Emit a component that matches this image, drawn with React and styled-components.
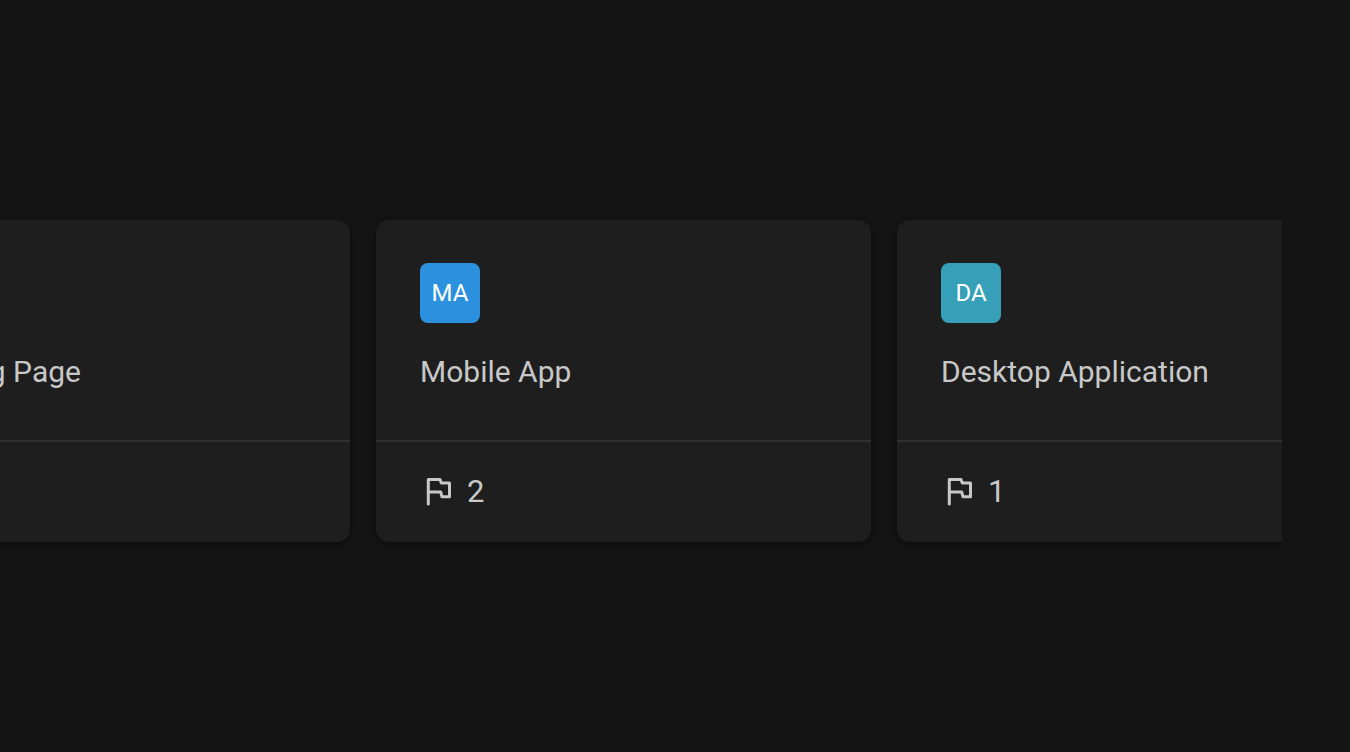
import React from "react";
import styled, { createGlobalStyle } from "styled-components";

const GlobalStyle = createGlobalStyle`
  * { box-sizing: border-box; }
  body {
    margin: 0;
    background: #141414;
    color: #c8c8c8;
    font-family: Roboto, "Liberation Sans", sans-serif;
  }
`;

const Page = styled.main`
  min-height: 100vh;
  padding: 204px 68px 194px 0;
`;

const Carousel = styled.section`
  overflow: hidden;
  padding: 16px 0;
`;

const Track = styled.ul`
  display: flex;
  gap: 26px;
  margin: 0 0 0 -145px;
  padding: 0;
  list-style: none;
`;

const Card = styled.li`
  flex: 0 0 495px;
  border-radius: 13px;
  background: #1e1e1e;
  box-shadow: 0 2px 6px rgba(0, 0, 0, 0.4);
`;

const CardBody = styled.div`
  padding: 43px 44px 49px;
`;

const Avatar = styled.div`
  display: flex;
  align-items: center;
  justify-content: center;
  width: 60px;
  height: 60px;
  border-radius: 8px;
  background: ${(p) => p.$color};
  color: #fff;
  font-size: 24px;
  line-height: 30px;
`;

const Title = styled.h2`
  margin: 29px 0 0;
  font-size: 30px;
  font-weight: 400;
  line-height: 39px;
  white-space: nowrap;
`;

const CardFooter = styled.footer`
  display: flex;
  align-items: center;
  gap: 13px;
  height: 102px;
  padding: 0 48px;
  border-top: 2px solid #303030;
  font-size: 31px;
  line-height: 40px;
`;

const Flag = styled.svg`
  width: 30px;
  height: 32px;
  fill: none;
  stroke: currentColor;
  stroke-width: 3;
  stroke-linecap: round;
  stroke-linejoin: round;
`;

const projects = [
  { title: "Landing Page", color: "#1e1e1e" },
  { title: "Mobile App", initials: "MA", color: "#2b90dd", flags: 2 },
  { title: "Desktop Application", initials: "DA", color: "#36a0b8", flags: 1 },
];

function FlagIcon() {
  return (
    <Flag viewBox="0 0 30 32" aria-hidden="true">
      <path d="M4.3 28V3.4H16L17.3 7H25.5V20.8H18L16.7 16H4.3" />
    </Flag>
  );
}

export default function App() {
  return (
    <>
      <GlobalStyle />
      <Page>
        <Carousel aria-label="Projects">
          <Track>
            {projects.map(({ title, initials, color, flags }) => (
              <Card key={title}>
                <CardBody>
                  <Avatar $color={color}>{initials}</Avatar>
                  <Title>{title}</Title>
                </CardBody>
                <CardFooter>
                  {flags && (
                    <>
                      <FlagIcon />
                      <span>{flags}</span>
                    </>
                  )}
                </CardFooter>
              </Card>
            ))}
          </Track>
        </Carousel>
      </Page>
    </>
  );
}
